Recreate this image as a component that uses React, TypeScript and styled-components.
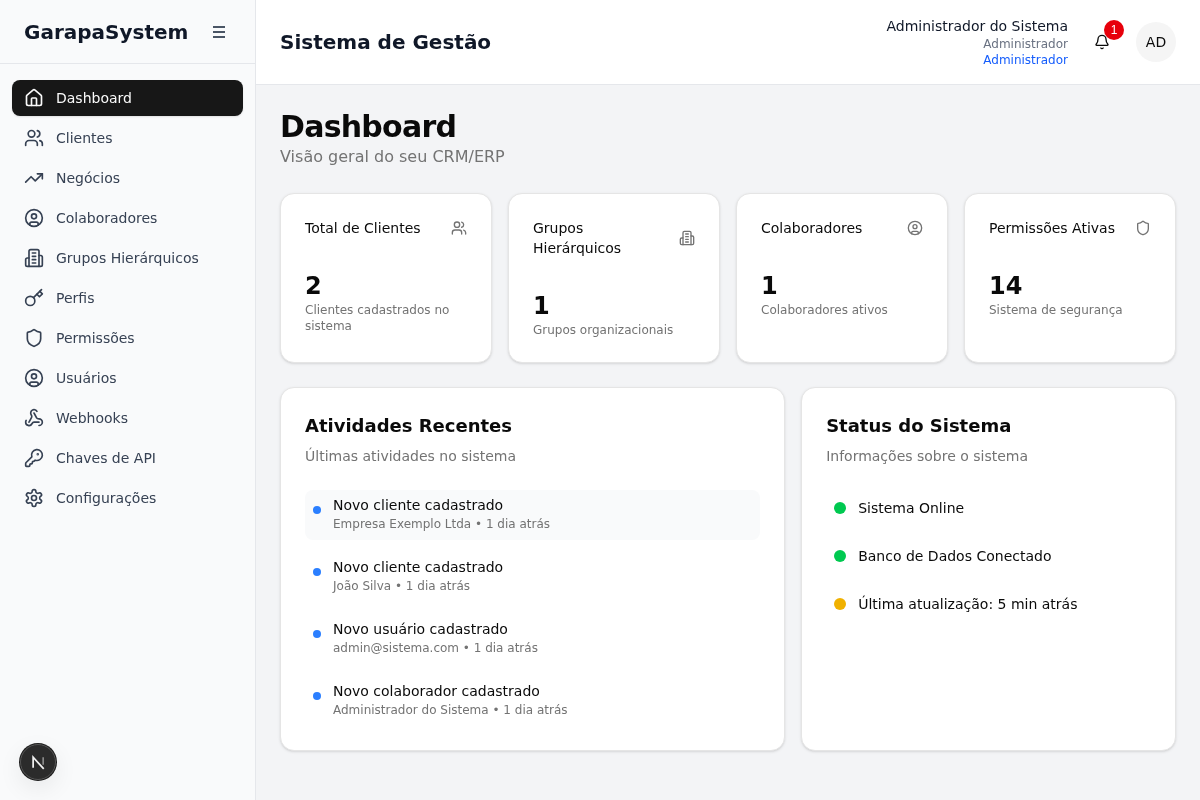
import React from "react"
import styled, { createGlobalStyle } from "styled-components"
import {
  Bell,
  CircleUser,
  House,
  KeyRound,
  Shield,
  TrendingUp,
  Users,
  Webhook,
} from "lucide-react"

const GlobalStyle = createGlobalStyle`
  html, body {
    margin: 0;
    height: 100%;
    font-family: "DejaVu Sans", sans-serif;
    color: #0a0a0a;
    -webkit-font-smoothing: antialiased;
  }
  * {
    box-sizing: border-box;
  }
`

const Layout = styled.div`
  display: flex;
  height: 100vh;
  overflow: hidden;
  background: #f3f4f6;
  will-change: transform;
`

const Sidebar = styled.aside`
  width: 256px;
  flex-shrink: 0;
  background: #f9fafb;
  border-right: 1px solid #e5e7eb;
`

const Brand = styled.div`
  height: 64px;
  padding: 0 24px;
  display: flex;
  align-items: center;
  justify-content: space-between;
  border-bottom: 1px solid #e5e7eb;
`

const BrandName = styled.span`
  font-size: 20px;
  line-height: 28px;
  font-weight: 700;
  color: #101828;
`

const MenuButton = styled.button`
  width: 16px;
  height: 16px;
  margin-right: 4px;
  padding: 0;
  border: 0;
  background: none;
  color: #4a5565;
  display: flex;
`

const Nav = styled.nav`
  padding: 16px 12px;
  display: flex;
  flex-direction: column;
  gap: 4px;
`

const NavItem = styled.a<{ $active?: boolean }>`
  height: 36px;
  padding: 0 12px;
  display: flex;
  align-items: center;
  gap: 12px;
  border-radius: 8px;
  font-size: 14px;
  line-height: 20px;
  color: ${(p) => (p.$active ? "#fafafa" : "#364153")};
  background: ${(p) => (p.$active ? "#171717" : "transparent")};
  box-shadow: ${(p) => (p.$active ? "0 1px 2px rgba(0,0,0,.1)" : "none")};
`

const Content = styled.div`
  flex: 1;
  min-width: 0;
  display: flex;
  flex-direction: column;
`

const TopBar = styled.header`
  height: 85px;
  padding: 0 24px;
  display: flex;
  align-items: center;
  justify-content: space-between;
  background: #fff;
  border-bottom: 1px solid #e5e7eb;
`

const PageTitle = styled.h1`
  margin: 0;
  font-size: 20px;
  line-height: 28px;
  font-weight: 700;
  color: #101828;
`

const UserArea = styled.div`
  display: flex;
  align-items: center;
  gap: 16px;
`

const UserInfo = styled.div`
  display: flex;
  flex-direction: column;
  align-items: flex-end;
  font-size: 12px;
  line-height: 16px;
`

const UserName = styled.span`
  font-size: 14px;
  line-height: 20px;
  color: #101828;
`

const UserRole = styled.span`
  color: #6a7282;
`

const UserGroup = styled.span`
  color: #155dfc;
`

const BellButton = styled.button`
  position: relative;
  width: 36px;
  height: 36px;
  padding: 0;
  border: 0;
  background: none;
  color: #0a0a0a;
  display: flex;
  align-items: center;
  justify-content: center;
`

const BellBadge = styled.span`
  position: absolute;
  top: -4px;
  right: -4px;
  width: 20px;
  height: 20px;
  border-radius: 50%;
  background: #e7000b;
  color: #fff;
  font-size: 12px;
  line-height: 20px;
  text-align: center;
`

const Avatar = styled.div`
  width: 40px;
  height: 40px;
  border-radius: 50%;
  background: #f5f5f5;
  display: flex;
  align-items: center;
  justify-content: center;
  font-size: 14px;
  color: #0a0a0a;
`

const Main = styled.main`
  flex: 1;
  padding: 24px;
  display: flex;
  flex-direction: column;
  gap: 24px;
`

const Heading = styled.h2`
  margin: 0;
  font-size: 30px;
  line-height: 36px;
  font-weight: 700;
  letter-spacing: -0.75px;
  color: #0a0a0a;
`

const Subheading = styled.p`
  margin: 0;
  font-size: 16px;
  line-height: 24px;
  color: #737373;
`

const StatGrid = styled.div`
  display: grid;
  grid-template-columns: repeat(4, 1fr);
  gap: 16px;
`

const Card = styled.section`
  background: #fff;
  border: 1px solid #e5e5e5;
  border-radius: 14px;
  padding: 24px;
  box-shadow: 0 1px 3px rgba(0, 0, 0, 0.1), 0 1px 2px -1px rgba(0, 0, 0, 0.1);
`

const StatHeader = styled.div`
  display: flex;
  align-items: center;
  justify-content: space-between;
  gap: 8px;
  margin-bottom: 32px;
  color: #737373;

  svg {
    flex-shrink: 0;
  }
`

const StatTitle = styled.span`
  font-size: 14px;
  line-height: 20px;
  color: #0a0a0a;
`

const StatValue = styled.div`
  font-size: 24px;
  line-height: 32px;
  font-weight: 700;
  color: #0a0a0a;
`

const StatHint = styled.p`
  margin: 0;
  font-size: 12px;
  line-height: 16px;
  color: #737373;
`

const PanelGrid = styled.div`
  display: grid;
  grid-template-columns: repeat(7, 1fr);
  gap: 16px;
`

const Panel = styled(Card)<{ $span: number }>`
  grid-column: span ${(p) => p.$span};
`

const PanelTitle = styled.h3`
  margin: 0 0 6px;
  font-size: 18px;
  line-height: 28px;
  font-weight: 700;
  color: #0a0a0a;
`

const PanelHint = styled.p`
  margin: 0 0 24px;
  font-size: 14px;
  line-height: 20px;
  color: #737373;
`

const PanelList = styled.div`
  display: flex;
  flex-direction: column;
  gap: 12px;
`

const ActivityRow = styled.div<{ $highlight?: boolean }>`
  padding: 8px;
  display: flex;
  align-items: flex-start;
  gap: 12px;
  border-radius: 8px;
  background: ${(p) => (p.$highlight ? "#f9fafb" : "transparent")};
`

const ActivityDot = styled.span`
  width: 8px;
  height: 8px;
  margin-top: 8px;
  border-radius: 50%;
  background: #2b7fff;
  flex-shrink: 0;
`

const ActivityText = styled.div`
  display: flex;
  flex-direction: column;
  gap: 4px;
`

const ActivityTitle = styled.span`
  font-size: 14px;
  line-height: 14px;
  color: #0a0a0a;
`

const ActivityMeta = styled.span`
  font-size: 12px;
  line-height: 16px;
  color: #737373;
`

const StatusRow = styled.div`
  padding: 8px;
  display: flex;
  align-items: center;
  gap: 12px;
  font-size: 14px;
  line-height: 20px;
  color: #0a0a0a;
`

const StatusDot = styled.span<{ $colour: string }>`
  width: 12px;
  height: 12px;
  border-radius: 50%;
  background: ${(p) => p.$colour};
  flex-shrink: 0;
`

const DevBadge = styled.div`
  position: fixed;
  left: 20px;
  bottom: 20px;
  width: 36px;
  height: 36px;
  border-radius: 50%;
  background: #2b2b2b;
  border: 1px solid #555;
  box-shadow: 0 0 0 1px #1c1c1c, 0 8px 24px rgba(0, 0, 0, 0.08);
  display: flex;
  align-items: center;
  justify-content: center;
`

type IconProps = { size: number }

const LineIcon: React.FC<IconProps & { children: React.ReactNode }> = ({ size, children }) => (
  <svg
    width={size}
    height={size}
    viewBox="0 0 24 24"
    fill="none"
    stroke="currentColor"
    strokeWidth="2"
    strokeLinecap="round"
    strokeLinejoin="round"
  >
    {children}
  </svg>
)

const BuildingIcon: React.FC<IconProps> = ({ size }) => (
  <LineIcon size={size}>
    <path d="M6 22V4a2 2 0 0 1 2-2h8a2 2 0 0 1 2 2v18Z" />
    <path d="M6 12H4a2 2 0 0 0-2 2v6a2 2 0 0 0 2 2h2" />
    <path d="M18 9h2a2 2 0 0 1 2 2v9a2 2 0 0 1-2 2h-2" />
    <path d="M10 6h4" />
    <path d="M10 10h4" />
    <path d="M10 14h4" />
    <path d="M10 18h4" />
  </LineIcon>
)

const KeyIcon: React.FC<IconProps> = ({ size }) => (
  <LineIcon size={size}>
    <circle cx="7.5" cy="15.5" r="5.5" />
    <path d="m21 2-9.6 9.6" />
    <path d="m15.5 7.5 3 3L22 7l-3-3" />
  </LineIcon>
)

const GearIcon: React.FC<IconProps> = ({ size }) => (
  <LineIcon size={size}>
    <path d="M12.22 2h-.44a2 2 0 0 0-2 2v.18a2 2 0 0 1-1 1.73l-.43.25a2 2 0 0 1-2 0l-.15-.08a2 2 0 0 0-2.73.73l-.22.38a2 2 0 0 0 .73 2.73l.15.1a2 2 0 0 1 1 1.72v.51a2 2 0 0 1-1 1.74l-.15.09a2 2 0 0 0-.73 2.73l.22.38a2 2 0 0 0 2.73.73l.15-.08a2 2 0 0 1 2 0l.43.25a2 2 0 0 1 1 1.73V20a2 2 0 0 0 2 2h.44a2 2 0 0 0 2-2v-.18a2 2 0 0 1 1-1.73l.43-.25a2 2 0 0 1 2 0l.15.08a2 2 0 0 0 2.73-.73l.22-.39a2 2 0 0 0-.73-2.73l-.15-.08a2 2 0 0 1-1-1.74v-.5a2 2 0 0 1 1-1.74l.15-.09a2 2 0 0 0 .73-2.73l-.22-.38a2 2 0 0 0-2.73-.73l-.15.08a2 2 0 0 1-2 0l-.43-.25a2 2 0 0 1-1-1.73V4a2 2 0 0 0-2-2z" />
    <circle cx="12" cy="12" r="3" />
  </LineIcon>
)

const navItems = [
  { label: "Dashboard", icon: House, active: true },
  { label: "Clientes", icon: Users },
  { label: "Negócios", icon: TrendingUp },
  { label: "Colaboradores", icon: CircleUser },
  { label: "Grupos Hierárquicos", icon: BuildingIcon },
  { label: "Perfis", icon: KeyIcon },
  { label: "Permissões", icon: Shield },
  { label: "Usuários", icon: CircleUser },
  { label: "Webhooks", icon: Webhook },
  { label: "Chaves de API", icon: KeyRound },
  { label: "Configurações", icon: GearIcon },
]

const stats = [
  { title: "Total de Clientes", icon: Users, value: "2", hint: "Clientes cadastrados no sistema" },
  { title: "Grupos Hierárquicos", icon: BuildingIcon, value: "1", hint: "Grupos organizacionais" },
  { title: "Colaboradores", icon: CircleUser, value: "1", hint: "Colaboradores ativos" },
  { title: "Permissões Ativas", icon: Shield, value: "14", hint: "Sistema de segurança" },
]

const activities = [
  { title: "Novo cliente cadastrado", meta: "Empresa Exemplo Ltda • 1 dia atrás" },
  { title: "Novo cliente cadastrado", meta: "João Silva • 1 dia atrás" },
  { title: "Novo usuário cadastrado", meta: "admin@sistema.com • 1 dia atrás" },
  { title: "Novo colaborador cadastrado", meta: "Administrador do Sistema • 1 dia atrás" },
]

const statuses = [
  { label: "Sistema Online", colour: "#00c950" },
  { label: "Banco de Dados Conectado", colour: "#00c950" },
  { label: "Última atualização: 5 min atrás", colour: "#f0b100" },
]

const App: React.FC = () => {
  return (
    <Layout>
      <GlobalStyle />
      <Sidebar>
        <Brand>
          <BrandName>GarapaSystem</BrandName>
          <MenuButton>
            <svg width="16" height="16" viewBox="0 0 16 16" stroke="currentColor" strokeWidth="2">
              <path d="M2 3h12" />
              <path d="M2 8h12" />
              <path d="M2 13h12" />
            </svg>
          </MenuButton>
        </Brand>
        <Nav>
          {navItems.map(({ label, icon: Icon, active }) => (
            <NavItem key={label} $active={active}>
              <Icon size={20} />
              {label}
            </NavItem>
          ))}
        </Nav>
      </Sidebar>
      <Content>
        <TopBar>
          <PageTitle>Sistema de Gestão</PageTitle>
          <UserArea>
            <UserInfo>
              <UserName>Administrador do Sistema</UserName>
              <UserRole>Administrador</UserRole>
              <UserGroup>Administrador</UserGroup>
            </UserInfo>
            <BellButton>
              <Bell size={16} />
              <BellBadge>1</BellBadge>
            </BellButton>
            <Avatar>AD</Avatar>
          </UserArea>
        </TopBar>
        <Main>
          <div>
            <Heading>Dashboard</Heading>
            <Subheading>Visão geral do seu CRM/ERP</Subheading>
          </div>
          <StatGrid>
            {stats.map(({ title, icon: Icon, value, hint }) => (
              <Card key={title}>
                <StatHeader>
                  <StatTitle>{title}</StatTitle>
                  <Icon size={16} />
                </StatHeader>
                <StatValue>{value}</StatValue>
                <StatHint>{hint}</StatHint>
              </Card>
            ))}
          </StatGrid>
          <PanelGrid>
            <Panel $span={4}>
              <PanelTitle>Atividades Recentes</PanelTitle>
              <PanelHint>Últimas atividades no sistema</PanelHint>
              <PanelList>
                {activities.map((item, i) => (
                  <ActivityRow key={item.meta} $highlight={i === 0}>
                    <ActivityDot />
                    <ActivityText>
                      <ActivityTitle>{item.title}</ActivityTitle>
                      <ActivityMeta>{item.meta}</ActivityMeta>
                    </ActivityText>
                  </ActivityRow>
                ))}
              </PanelList>
            </Panel>
            <Panel $span={3}>
              <PanelTitle>Status do Sistema</PanelTitle>
              <PanelHint>Informações sobre o sistema</PanelHint>
              <PanelList>
                {statuses.map((item) => (
                  <StatusRow key={item.label}>
                    <StatusDot $colour={item.colour} />
                    {item.label}
                  </StatusRow>
                ))}
              </PanelList>
            </Panel>
          </PanelGrid>
        </Main>
      </Content>
      <DevBadge>
        <svg width="21" height="21" viewBox="0 0 18 18" fill="none">
          <path d="M4.4 13.5V4.5L13.5 14.5" stroke="#f0f0f0" strokeWidth="1.5" />
          <path d="M13 4.5v6.5" stroke="#8a8a8a" strokeWidth="1.4" />
        </svg>
      </DevBadge>
    </Layout>
  )
}

export default App
